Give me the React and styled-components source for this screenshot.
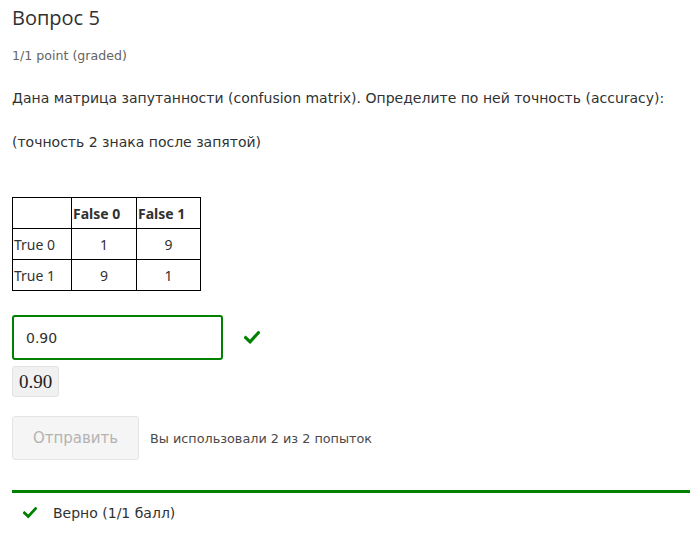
import React from "react";
import styled, { createGlobalStyle } from "styled-components";

const GlobalStyle = createGlobalStyle`
  body {
    margin: 0;
    background: #fff;
    font-family: "DejaVu Sans", "Open Sans", sans-serif;
    color: #313131;
  }
`;

const StyledWrapper = styled.div`
  padding: 0 0 0 12px;
  width: 678px;
`;

const StyledHeading = styled.h3`
  margin: 0;
  padding-top: 5px;
  font-family: "Open Sans", sans-serif;
  font-size: 20px;
  font-weight: 400;
  line-height: 26px;
  color: #313131;
`;

const StyledPoints = styled.div`
  margin-top: 16px;
  font-size: 12.6px;
  line-height: 18px;
  color: #646464;
`;

const StyledParagraph = styled.p`
  margin: ${({ top }) => top}px 0 0;
  font-size: 14px;
  line-height: 22px;
  color: #313131;
`;

const StyledTable = styled.table`
  margin-top: 44px;
  border-collapse: collapse;
  font-family: "Noto Sans", "Open Sans", sans-serif;
  font-size: 14px;
  color: #313131;

  td,
  th {
    border: 1px solid #000;
    height: 30px;
    padding: 0 1px;
  }

  th {
    font-weight: 700;
    text-align: left;
  }
`;

const StyledCell = styled.td`
  width: ${({ w }) => w}px;
  text-align: ${({ center }) => (center ? "center" : "left")};
`;

const StyledAnswerRow = styled.div`
  margin-top: 24px;
  display: flex;
  align-items: center;
  gap: 21px;
`;

const StyledInput = styled.div`
  box-sizing: border-box;
  width: 211px;
  height: 45px;
  border: 2px solid #008100;
  border-radius: 3px;
  padding: 0 12px;
  display: flex;
  align-items: center;
  font-size: 14px;
  color: #313131;
`;

const StyledPreview = styled.div`
  margin-top: 6px;
  display: inline-block;
  box-sizing: border-box;
  height: 31px;
  padding: 0 6px;
  background: #f1f1f1;
  border: 1px solid #e2e2e2;
  border-radius: 3px;
  font-family: "Liberation Serif", "DejaVu Serif", serif;
  font-size: 19px;
  line-height: 29px;
  color: #222;
`;

const StyledActions = styled.div`
  margin-top: 19px;
  display: flex;
  align-items: center;
  gap: 11px;
`;

const StyledButton = styled.button`
  box-sizing: border-box;
  width: 127px;
  height: 44px;
  border: 1px solid #e4e4e4;
  border-radius: 3px;
  background: #f5f5f5;
  color: #b3b3b3;
  font-family: "DejaVu Sans", sans-serif;
  font-size: 15px;
  cursor: default;
`;

const StyledAttempts = styled.span`
  font-size: 12.8px;
  color: #4a4a4a;
`;

const StyledNotification = styled.div`
  margin-top: 30px;
  border-top: 3px solid #008100;
  display: flex;
  align-items: center;
  gap: 16px;
  padding: 5px 0 0 11px;
  height: 30px;
  font-size: 14px;
  color: #313131;
`;

const CheckIcon = ({ size }) => (
  <svg width={size} height={size * 0.8} viewBox="0 0 16 13">
    <path
      d="M1.5 6.8 L6 11 L14.5 1.8"
      fill="none"
      stroke="#008100"
      strokeWidth="3.2"
      strokeLinecap="square"
    />
  </svg>
);

const App = () => (
  <>
    <GlobalStyle />
    <StyledWrapper>
      <StyledHeading>Вопрос 5</StyledHeading>
      <StyledPoints>1/1 point (graded)</StyledPoints>
      <StyledParagraph top={22}>
        Дана матрица запутанности (confusion matrix). Определите по ней точность (accuracy):
      </StyledParagraph>
      <StyledParagraph top={22}>(точность 2 знака после запятой)</StyledParagraph>
      <StyledTable>
        <tbody>
          <tr>
            <StyledCell w={56} />
            <th>False 0</th>
            <th>False 1</th>
          </tr>
          <tr>
            <StyledCell w={56}>True 0</StyledCell>
            <StyledCell w={62} center>1</StyledCell>
            <StyledCell w={61} center>9</StyledCell>
          </tr>
          <tr>
            <StyledCell w={56}>True 1</StyledCell>
            <StyledCell w={62} center>9</StyledCell>
            <StyledCell w={61} center>1</StyledCell>
          </tr>
        </tbody>
      </StyledTable>
      <StyledAnswerRow>
        <StyledInput>0.90</StyledInput>
        <CheckIcon size={16} />
      </StyledAnswerRow>
      <StyledPreview>0.90</StyledPreview>
      <StyledActions>
        <StyledButton disabled>Отправить</StyledButton>
        <StyledAttempts>Вы использовали 2 из 2 попыток</StyledAttempts>
      </StyledActions>
      <StyledNotification>
        <CheckIcon size={14} />
        <span>Верно (1/1 балл)</span>
      </StyledNotification>
    </StyledWrapper>
  </>
);

export default App;
